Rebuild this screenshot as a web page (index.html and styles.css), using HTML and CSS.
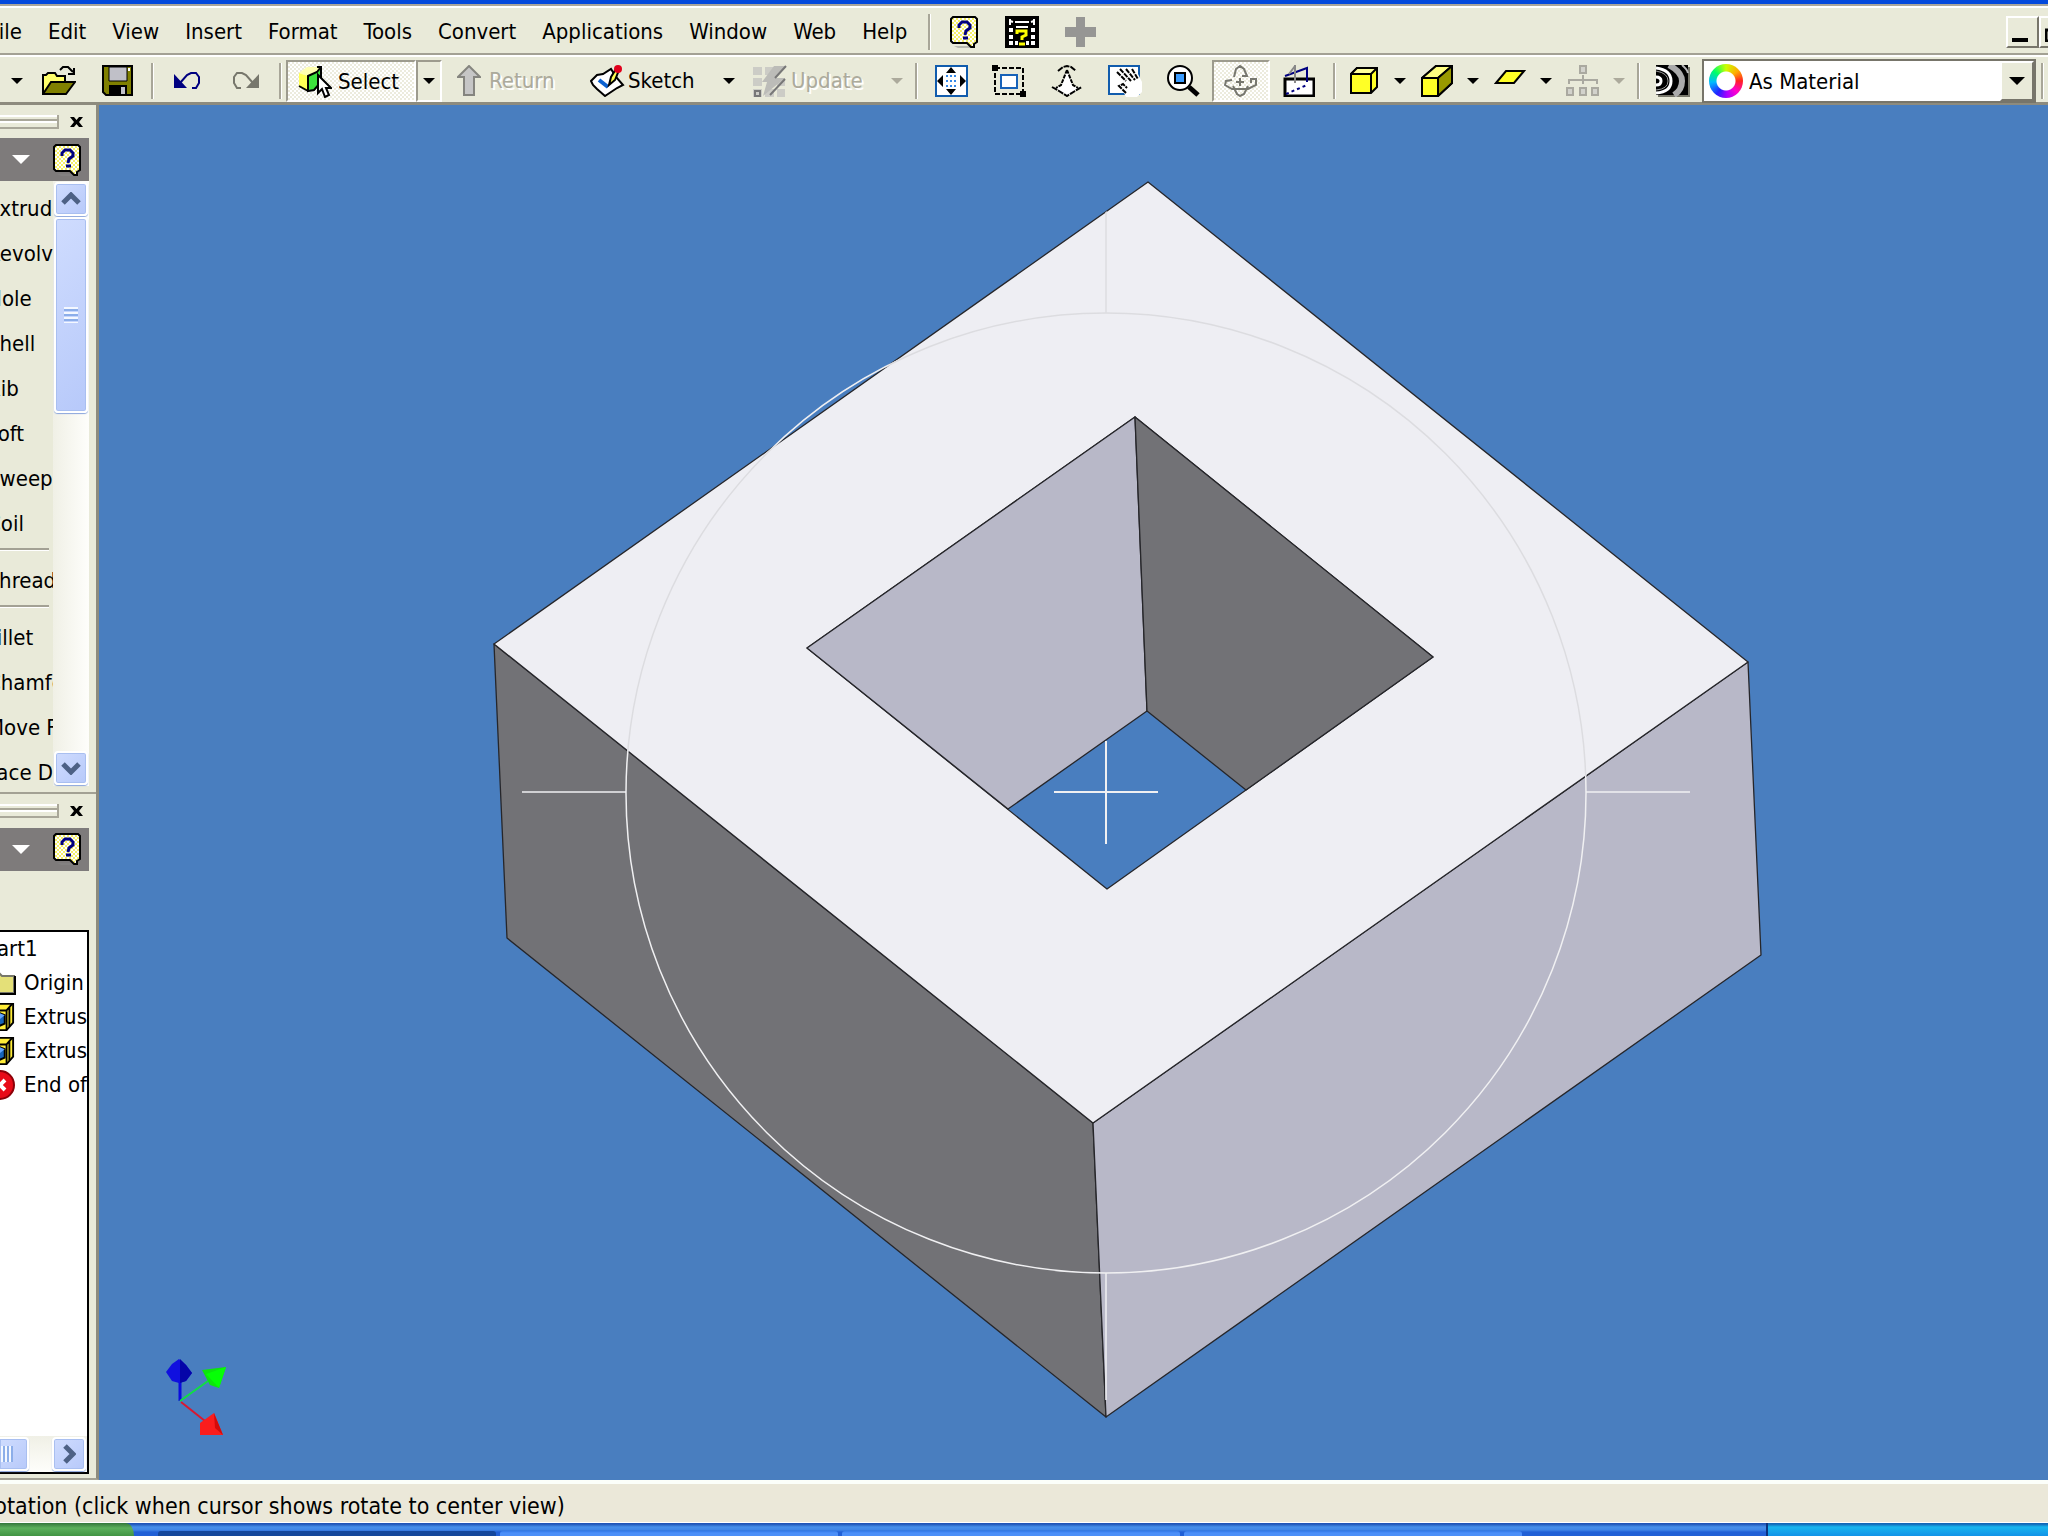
FILE: index.html
```html
<!DOCTYPE html>
<html lang="en">
<head>
<meta charset="utf-8">
<title>Part1</title>
<link rel="stylesheet" href="styles.css">
</head>
<body>
<svg class="defs" aria-hidden="true">
  <defs>
    <pattern id="dots" width="4" height="4" patternUnits="userSpaceOnUse"><rect width="4" height="4" fill="#fff"/><path d="M0 0h2v2h-2zM2 2h2v2h-2z" fill="#f5f06a"/></pattern>
    <symbol id="help" viewBox="0 0 28 32">
      <path d="M4 30h18v2h-14z" fill="#888" opacity=".5"/>
      <path d="M3 1h22l2 2v23l-3 2v3h-3l-4-4H3l-2-2V3z" fill="url(#dots)" stroke="#000" stroke-width="2"/>
      <path d="M9 12V9l3-3h5l3 3v3l-4 3-1 4M13 22h5" fill="none" stroke="#000080" stroke-width="3"/>
    </symbol>
    <symbol id="arrow" viewBox="0 0 12 6"><path d="M0 0h12L6 6z" fill="currentColor"/></symbol>
    <symbol id="close" viewBox="0 0 13 12"><path d="M0 1h4l2.500 3 2.500-3h4l-4 5 4 5H9L6.500 8 4 11H0l4-5z" fill="#000"/></symbol>
    <symbol id="feature" viewBox="0 0 32 32">
      <path d="M2 9l6-7h22v20l-7 8H2z" fill="#ffed38" stroke="#000" stroke-width="2"/>
      <path d="M23 30V9l6-7M2 9h21M26 6v20" fill="none" stroke="#000" stroke-width="2"/>
      <path d="M5 15l11-3 5 2v9l-9 4-7-3z" fill="#1764ba" stroke="#000" stroke-width="2"/><path d="M16 12l5 2-6 5-6-2z" fill="#62a5ff"/>
    </symbol>
  </defs>
</svg>

<header class="top">
  <div class="titlebar"></div>
  <div class="menubar">
    <nav class="menus" aria-label="Main menu">
      <button>File</button><button>Edit</button><button>View</button><button>Insert</button><button>Format</button><button>Tools</button><button>Convert</button><button>Applications</button><button>Window</button><button>Web</button><button>Help</button>
    </nav>
    <span class="sep"></span>
    <button class="tool" aria-label="Help topics"><svg width="28" height="32"><use href="#help"/></svg></button>
    <button class="tool" aria-label="Visual syllabus">
      <svg width="34" height="32" viewBox="0 0 34 32"><path d="M0 0h34v32H0z"/><path d="M5 3v6M29 3v6M10 6h14M5 5l3 1M29 5l-3 1" stroke="#fff" stroke-width="2"/><path d="M4 12h4v4H4zM4 19h4v4H4zM4 25h4v4H4zM26 12h4v4h-4zM26 19h4v4h-4zM26 25h4v4h-4zM11 10h12v2H11zM10 25h3v4h-3zM21 25h3v4h-3z" fill="#fff"/><path d="M12 18v-3h9v4l-4 2v3M14 28h6" fill="none" stroke="#ff0" stroke-width="3"/></svg>
    </button>
    <button class="tool" aria-label="Add"><svg width="31" height="30" viewBox="0 0 31 30"><path d="M11 0h9v10h11v10H20v10h-9V20H0V10h11z" fill="#969694"/></svg></button>
    <div class="winbuttons">
      <button aria-label="Minimize"><svg width="16" height="4" viewBox="0 0 16 4"><path d="M0 0h16v4H0z"/></svg></button>
      <button aria-label="Restore"><svg width="16" height="14" viewBox="0 0 16 14"><path d="M1 2h12v11H1z" fill="none" stroke="#000" stroke-width="3"/></svg></button>
    </div>
  </div>

  <div class="toolbar" role="toolbar" aria-label="Standard">
    <button class="drop" aria-label="New options"><svg width="12" height="6"><use href="#arrow"/></svg></button>
    <button class="tool" aria-label="Open">
      <svg width="34" height="30" viewBox="0 0 34 30"><path d="M1 28V9h3l2-2h7l2 3h8v6" fill="#ffff6b" stroke="#000" stroke-width="2"/><path d="M1 28L9 16h24l-9 12z" fill="#808000" stroke="#000" stroke-width="2"/><path d="M18 4l3-3h5l5 5M32 2v6h-6" fill="none" stroke="#000" stroke-width="2"/></svg>
    </button>
    <button class="tool" aria-label="Save">
      <svg width="31" height="31" viewBox="0 0 31 31"><path d="M1 1h29v29H4l-3-3z" fill="#808000" stroke="#000" stroke-width="2"/><path d="M7 2h18v14H7z" fill="#c0c0c8" stroke="#000" stroke-width="1"/><path d="M7 20h18v10H7z"/><path d="M19 22h4v7h-4z" fill="#c0c0c8"/><path d="M26 3h2v3h-2z" fill="#fff"/></svg>
    </button>
    <span class="sep"></span>
    <button class="tool" aria-label="Undo"><svg width="27" height="18" viewBox="0 0 27 18"><path d="M0 2v14h13z" fill="#000080"/><path d="M6 11l7-8 4-2h5l3 4v6l-3 5h-4" fill="none" stroke="#000080" stroke-width="2"/></svg></button>
    <button class="tool" aria-label="Redo"><svg width="27" height="18" viewBox="0 0 27 18"><path d="M27 2v14H14z" fill="#77776c"/><path d="M21 11l-7-8-4-2H5L2 5v6l3 5h4" fill="none" stroke="#77776c" stroke-width="2"/></svg></button>
    <span class="sep"></span>
    <button class="cmd select-cmd pressed">
      <svg width="34" height="32" viewBox="0 0 34 32"><path d="M1 7l8-6h13l-4 7-8 2z" fill="#ffffb0"/><path d="M1 7l9 3v15l-9-4z" fill="#ff5"/><path d="M10 10l9-4 4-5v15l-7 8-6 1z" fill="#3ce03c" stroke="#000" stroke-width="2"/><path d="M1 20l9 5M19 1h4" stroke="#000" stroke-width="2"/><path d="M20 9v18l4-4 3 8 4-2-3-7h5z" fill="#fff" stroke="#000" stroke-width="2"/></svg>
      Select</button>
    <button class="drop framed" aria-label="Select options"><svg width="12" height="6"><use href="#arrow"/></svg></button>
    <button class="cmd return-cmd" disabled>
      <svg width="24" height="32" viewBox="0 0 24 32"><path d="M7 30V12H1L12 1l11 11h-6v18z" fill="#c6c6c6" stroke="#85857f" stroke-width="2"/></svg>
      Return</button>
    <button class="cmd sketch-cmd">
      <svg width="36" height="32" viewBox="0 0 36 32"><path d="M1 16l6-6 6-1 8-5 5 8 7 8-6 3-12 8-8-7-4-4z" fill="#fff" stroke="#000" stroke-width="2"/><path d="M9 15l9 7" stroke="#0b61d0" stroke-width="4"/><path d="M19 20l2-8 5-8 3 1-4 10z" fill="#ff5" stroke="#000" stroke-width="2"/><circle cx="28" cy="4" r="4" fill="#e1001c"/></svg>
      Sketch</button>
    <button class="drop" aria-label="Sketch options"><svg width="12" height="6"><use href="#arrow"/></svg></button>
    <button class="cmd update-cmd" disabled>
      <svg width="34" height="32" viewBox="0 0 34 32"><path d="M0 2h9v8H0zM0 13h9v8H0zM0 24h9v8H0zM12 24h9v8h-9zM24 24h8v8h-8zM24 13h8v8h-8zM12 2h9v8h-9z" fill="#ccccc6"/><path d="M21 1h12L23 13h9L10 31l4-14h-5z" fill="#bcbcb8"/><path d="M33 1L22 13M32 14L17 30M2 26h5v5H2z" stroke="#777" fill="none" stroke-width="2"/></svg>
      Update</button>
    <button class="drop" aria-label="Update options" disabled><svg width="12" height="6"><use href="#arrow"/></svg></button>
    <span class="sep"></span>
    <button class="tool" aria-label="Zoom all">
      <svg width="33" height="32" viewBox="0 0 33 32"><path d="M1 1h31v30H1z" fill="#fff" stroke="#115cad" stroke-width="2"/><path d="M16 2l5 6H11zM16 30l5-6H11zM2 16l6-6v12zM31 16l-6-6v12z"/><path d="M11 11h11M11 21h11M11 16h11" stroke="#3488e8" stroke-width="2" stroke-dasharray="2 2"/></svg>
    </button>
    <button class="tool" aria-label="Zoom window">
      <svg width="34" height="32" viewBox="0 0 34 32"><path d="M3 3h28v26H3z" fill="none" stroke="#000" stroke-width="2" stroke-dasharray="5 2"/><path d="M0 0h6v6H0zM28 26h6v6h-6z"/><path d="M9 10h16v13H9z" fill="#fff" stroke="#1762b8" stroke-width="2"/></svg>
    </button>
    <button class="tool" aria-label="Zoom">
      <svg width="32" height="32" viewBox="0 0 32 32"><path d="M16 5l6 17h7l-13 9-13-9h7z" fill="#fff"/><path d="M7 6l5-4 4-1 4 1 5 4M1 22l7 4 8 5 8-5 7-4" fill="none" stroke="#000" stroke-width="2" stroke-dasharray="6 1"/><path d="M16 5l-6 15-5 3M16 5l6 15 5 3" fill="none" stroke="#000" stroke-width="2" stroke-dasharray="4 1"/></svg>
    </button>
    <button class="tool" aria-label="Pan">
      <svg width="34" height="32" viewBox="0 0 34 32"><path d="M1 1h30v28H1z" fill="#fff" stroke="#115cad" stroke-width="2"/><path d="M9 6l5-2 5 1 5-1 6 5 4 8v10l-5 5H18l-4-8-3-3 3-3 5 4z" fill="#fff"/><path d="M9 7l9 9M12 4l11 12M18 4l9 11M24 4l6 10M18 28l-7-7 4-2 4 4" fill="none" stroke="#000" stroke-width="2" stroke-dasharray="5 1"/></svg>
    </button>
    <button class="tool" aria-label="Zoom selected">
      <svg width="34" height="32" viewBox="0 0 34 32"><circle cx="14" cy="13" r="12" fill="#fff" stroke="#000" stroke-width="2"/><path d="M9 8h10v10H9z" fill="#3b9cff" stroke="#000" stroke-width="2"/><path d="M23 22l9 8" stroke="#000" stroke-width="5"/></svg>
    </button>
    <button class="tool pressed" aria-label="Rotate" aria-pressed="true">
      <svg width="34" height="32" viewBox="0 0 34 32"><path d="M10 12l2-8 4-3 4 3 3 7h-5M9 21l4 8 3 2 4-2 4-8M8 15l-6 1-1 4 7 4h16l8-4V14h-5v4M16 13v8M12 17h8" fill="none" stroke="#77776f" stroke-width="2"/></svg>
    </button>
    <button class="tool" aria-label="Look at">
      <svg width="32" height="32" viewBox="0 0 32 32"><path d="M2 14h29v17H2z" fill="#fff" stroke="#000" stroke-width="3"/><path d="M2 11L24 3v14" fill="none" stroke="#000080" stroke-width="2"/><path d="M12 0v18M6 9l6-8" stroke="#888" stroke-width="2"/><path d="M3 29l21-9" stroke="#000080" stroke-width="2" stroke-dasharray="3 3"/></svg>
    </button>
    <span class="sep"></span>
    <button class="split" aria-label="Display mode"><svg width="28" height="27" viewBox="0 0 28 27"><path d="M1 7l6-6h20v19l-6 6H1z" fill="#ffff26" stroke="#000" stroke-width="2"/><path d="M1 7l6-6h20l-6 6z" fill="#ffff9a" stroke="#000" stroke-width="2"/><path d="M21 7v19" stroke="#000" stroke-width="2"/></svg></button>
    <button class="drop" aria-label="Display options"><svg width="12" height="6"><use href="#arrow"/></svg></button>
    <button class="split" aria-label="Camera"><svg width="32" height="32" viewBox="0 0 32 32"><path d="M1 13L15 1h16v17L17 31H1z" fill="#ffff26" stroke="#000" stroke-width="2"/><path d="M1 13L15 1h16L17 13z" fill="#ffff80" stroke="#000" stroke-width="2"/><path d="M17 13L31 1v17L17 31z" fill="#999900" stroke="#000" stroke-width="2"/></svg></button>
    <button class="drop" aria-label="Camera options"><svg width="12" height="6"><use href="#arrow"/></svg></button>
    <button class="split plane" aria-label="Ground shadow"><svg width="32" height="16" viewBox="0 0 32 16"><path d="M2 14L12 2h18L20 14z" fill="#ffff26" stroke="#000" stroke-width="2"/></svg></button>
    <button class="drop" aria-label="Shadow options"><svg width="12" height="6"><use href="#arrow"/></svg></button>
    <button class="split" aria-label="Components" disabled><svg width="34" height="32" viewBox="0 0 34 32"><path d="M14 1h6v7h-6zM1 23h6v7H1zM14 23h6v7h-6zM26 23h6v7h-6z" fill="#d2d2cc" stroke="#aaa9a0" stroke-width="2"/><path d="M17 10v9M3 19v-4h28v4" fill="none" stroke="#aaa9a0" stroke-width="2"/></svg></button>
    <button class="drop" aria-label="Component options" disabled><svg width="12" height="6"><use href="#arrow"/></svg></button>
    <span class="sep"></span>
    <button class="tool" aria-label="Analyze faces">
      <svg width="34" height="32" viewBox="0 0 34 32"><path d="M2 2h32v30H2z" fill="#77776a"/><path d="M0 0h32v30H0z"/><path d="M0 12q5 0 5 4t-5 4M0 3q15 2 15 13T0 28" fill="none" stroke="#fff" stroke-width="3"/><path d="M0 6q12 2 12 10T0 25" fill="none" stroke="#999" stroke-width="1"/><path d="M13 0q13 7 13 16t-8 14" fill="none" stroke="#aaa" stroke-width="6"/><path d="M26 0q5 4 6 8" fill="none" stroke="#bbb" stroke-width="2"/></svg>
    </button>
    <label class="combo">
      <span class="ring"></span>
      <select aria-label="Color"><option>As Material</option></select>
      <span class="combo-button"><svg width="16" height="8" viewBox="0 0 16 8"><path d="M0 0h16L8 8z"/></svg></span>
    </label>
    <span class="sep"></span>
  </div>
</header>

<main class="workspace">
  <aside class="sidebar">
    <section class="panel">
      <div class="grip"><span></span><button aria-label="Close features"><svg width="13" height="12"><use href="#close"/></svg></button></div>
      <div class="panel-head"><button aria-label="Choose panel"><svg width="18" height="9"><use href="#arrow"/></svg></button><button aria-label="Panel help"><svg width="28" height="32"><use href="#help"/></svg></button></div>
      <div class="feature-body">
        <ul class="features">
          <li>Extrude</li><li>Revolve</li><li>Hole</li><li>Shell</li><li>Rib</li><li>Loft</li><li>Sweep</li><li>Coil</li>
          <li class="rule"></li>
          <li>Thread</li>
          <li class="rule"></li>
          <li>Fillet</li><li>Chamfer</li><li>Move Face</li><li>Face Draft</li>
        </ul>
        <div class="vscroll">
          <button class="sbtn" aria-label="Scroll up"><svg width="20" height="14" viewBox="0 0 20 14"><path d="M2 11l8-8 8 8" fill="none" stroke="#4d6185" stroke-width="5"/></svg></button>
          <div class="thumb"></div>
          <button class="sbtn end" aria-label="Scroll down"><svg width="20" height="14" viewBox="0 0 20 14"><path d="M2 3l8 8 8-8" fill="none" stroke="#4d6185" stroke-width="5"/></svg></button>
        </div>
      </div>
    </section>
    <section class="panel">
      <div class="grip"><span></span><button aria-label="Close browser"><svg width="13" height="12"><use href="#close"/></svg></button></div>
      <div class="panel-head"><button aria-label="Choose browser"><svg width="18" height="9"><use href="#arrow"/></svg></button><button aria-label="Browser help"><svg width="28" height="32"><use href="#help"/></svg></button></div>
      <div class="browser">
        <ul class="tree">
          <li class="root">Part1</li>
          <li><svg width="32" height="24" viewBox="0 0 32 24"><path d="M1 22V4l4-3h9l4 4h12v17z" fill="#e4e078" stroke="#77776a" stroke-width="2"/><path d="M31 5v18H2" fill="none" stroke="#000" stroke-width="2"/></svg>Origin</li>
          <li><svg width="32" height="30"><use href="#feature"/></svg>Extrusion1</li>
          <li><svg width="32" height="30"><use href="#feature"/></svg>Extrusion2</li>
          <li><svg width="32" height="30" viewBox="0 0 32 30"><circle cx="16" cy="15" r="14" fill="#e80b18" stroke="#8c0008" stroke-width="2"/><path d="M11 10l10 10M21 10L11 20" stroke="#fff" stroke-width="4"/></svg>End of Part</li>
        </ul>
        <div class="hscroll"><div class="thumb"></div><button class="sbtn" aria-label="Scroll right"><svg width="14" height="20" viewBox="0 0 14 20"><path d="M3 2l8 8-8 8" fill="none" stroke="#4d6185" stroke-width="5"/></svg></button></div>
      </div>
    </section>
  </aside>

  <svg class="viewport" viewBox="99 105 1949 1375" preserveAspectRatio="xMidYMid meet" role="img" aria-label="Block with a square through hole">
    <clipPath id="topface"><path d="M1148 182L1748 662L1093 1123L494 644z"/></clipPath>
    <g stroke="#26262a" stroke-width="1.300" stroke-linejoin="round">
      <path d="M494 644L1093 1123L1106 1417L507 938z" fill="#727276"/>
      <path d="M1093 1123L1748 662L1761 955L1106 1417z" fill="#b8b8c8"/>
      <path d="M1148 182L1748 662L1093 1123L494 644zM1135 417L807 648L1107 889L1433 657z" fill="#eeeef3" fill-rule="evenodd"/>
      <path d="M1135 417L807 648L1008 809L1147 711z" fill="#b8b8c8"/>
      <path d="M1135 417L1433 657L1246 790L1147 711z" fill="#727276"/>
    </g>
    <g fill="none" stroke="#f0f0f2" stroke-width="1.500">
      <circle cx="1106" cy="793" r="480"/>
      <path d="M522 792H626M1586 792H1690M1106 1273V1400"/>
      <path d="M1054 792H1158M1106 741V844" stroke-width="2"/>
    </g>
    <g fill="none" stroke="#dcdce0" stroke-width="1.500" clip-path="url(#topface)">
      <circle cx="1106" cy="793" r="480"/>
      <path d="M1106 209V313"/>
    </g>
    <path d="M180 1401v-24" stroke="#0b0be0" stroke-width="3"/>
    <path d="M166 1372l6-8 7-5 7 6 6 8-6 8-7 2-7-2z" fill="#1010df"/><path d="M180 1359l6 6 6 8-6 8-6 2z" fill="#0505a8"/>
    <path d="M180 1401l28-20" stroke="#10df42" stroke-width="2"/>
    <path d="M202 1370l24-3-7 21-9-3z" fill="#0de50d"/><path d="M206 1374l20-7-7 21z" fill="#06ff06"/>
    <path d="M181 1402l24 19" stroke="#d91830" stroke-width="2"/>
    <path d="M214 1413l9 22h-23v-12z" fill="#fa1d1d"/><path d="M214 1413l9 22-8-7z" fill="#d40a0a"/>
  </svg>
</main>

<footer>
  <div class="status">Rotation (click when cursor shows rotate to center view)</div>
  <div class="taskbar">
    <div class="start"></div>
    <div class="tasks"><span class="active"></span><span></span><span></span><span></span></div>
    <div class="tray"></div>
  </div>
</footer>
</body>
</html>
```
FILE: styles.css
```css
* { box-sizing: border-box; }
body {
  margin: 0;
  height: 100vh;
  display: flex;
  flex-direction: column;
  overflow: hidden;
  background: #e9ead9;
  color: #000;
  font: 22px/28px "DejaVu Sans Condensed", "Noto Sans", sans-serif;
}
button, select { font: inherit; color: inherit; background: none; border: 0; padding: 0; margin: 0; }
button { display: flex; align-items: center; justify-content: center; white-space: nowrap; flex: none; }
ul { list-style: none; margin: 0; padding: 0; }
svg { flex: none; }
.defs { position: absolute; width: 0; height: 0; }

.titlebar { height: 6px; background: #0349dc; border-bottom: 2px solid #a9a69c; }
.menubar {
  display: flex;
  align-items: center;
  height: 49px;
  padding-top: 2px;
  border-top: 2px solid #fff;
  border-bottom: 2px solid #a3a194;
}
.menus { display: flex; gap: 26px; margin-left: -11px; margin-right: 16px; }
.tool { width: 58px; height: 42px; }
.sep { flex: none; width: 12px; height: 36px; background: linear-gradient(90deg, transparent 5px, #a8a698 5px, #a8a698 7px, #fff 7px, #fff 8px, transparent 8px); }
.winbuttons { display: flex; margin-left: auto; margin-right: -24px; }
.winbuttons button { width: 33px; height: 32px; align-items: flex-end; padding: 0 6px 4px 0; border: 2px solid #fff; border-right-color: #77756a; border-bottom-color: #77756a; }

.toolbar {
  display: flex;
  align-items: center;
  height: 50px;
  padding-top: 2px;
  padding-left: 4px;
  border-top: 2px solid #fff;
  border-bottom: 3px solid #8d8b7e;
}
.drop { width: 26px; height: 42px; }
.framed { border: 2px solid #fff; border-left-color: #9d9b8e; border-top-color: #9d9b8e; }
.pressed {
  border: 2px solid #fff;
  border-left-color: #9d9b8e;
  border-top-color: #9d9b8e;
  background: repeating-conic-gradient(#fff 0 25%, #ecebdd 0 50%) 0 0 / 4px 4px;
}
.cmd { height: 42px; gap: 6px; justify-content: flex-start; }
.cmd:disabled, .drop:disabled { color: #acaa9c; text-shadow: 2px 2px #fff; }
.select-cmd { width: 130px; padding-left: 10px; padding-top: 2px; }
.return-cmd { width: 134px; padding-left: 15px; gap: 8px; }
.sketch-cmd { width: 140px; padding-left: 14px; gap: 2px; }
.update-cmd { width: 142px; padding-left: 11px; gap: 4px; }
.split { width: 47px; height: 42px; }
.plane svg { margin-bottom: 8px; }
.combo {
  display: flex;
  align-items: center;
  flex: 1;
  height: 44px;
  padding-left: 5px;
  background: #fff;
  border: 2px solid #77756a;
}
.ring {
  flex: none;
  width: 34px;
  height: 34px;
  border-radius: 50%;
  background: radial-gradient(circle, #fff 9px, transparent 10px), conic-gradient(#cf0, #fa0 50deg, #f22 90deg, #f0c 135deg, #a0f 175deg, #22f 215deg, #0bf 265deg, #0f6 310deg, #cf0);
}
.combo select { flex: 1; min-width: 0; height: 100%; padding-top: 3px; padding-left: 6px; appearance: none; outline: 0; }
.combo-button { display: flex; align-items: center; justify-content: center; width: 34px; height: 100%; background: #e9ead9; border: 2px solid #fff; border-right-color: #77756a; border-bottom-color: #77756a; }

.workspace { flex: 1; min-height: 0; display: grid; grid-template-columns: 99px minmax(0, 1fr); background: #497ebf; }
.sidebar {
  display: grid;
  grid-template-rows: minmax(0, 1fr) minmax(0, 1fr);
  min-height: 0;
  overflow: hidden;
  background: #e9ead9;
  border-right: 3px solid #8d8b7e;
  border-bottom: 2px solid #a3a194;
}
.panel { display: flex; flex-direction: column; min-height: 0; min-width: 0; padding-right: 7px; }
.panel + .panel { border-top: 2px solid #a3a194; }
.grip { display: flex; align-items: center; justify-content: space-between; height: 33px; flex: none; padding: 0 6px 0 0; }
.panel + .panel .grip { height: 34px; }
.grip span { width: 59px; height: 14px; border: 2px solid #a9a799; border-width: 0 2px 2px 0; background: linear-gradient(#fff 2px, transparent 2px, transparent 4px, #a9a799 4px, #a9a799 6px, #fff 6px, #fff 8px, transparent 8px); }
.panel-head { display: flex; align-items: center; justify-content: space-between; flex: none; height: 43px; padding: 0 8px 0 12px; background: #7e7b7b; color: #fff; }
.feature-body { display: flex; flex: 1; min-height: 0; margin-bottom: 6px; }
.features { flex: 1; min-width: 0; overflow: hidden; padding-top: 5px; }
.features li { height: 45px; line-height: 45px; margin-left: -13px; white-space: nowrap; }
.features .rule { height: 3px; margin: 2px 4px 7px 0; background: #a3a194; border-bottom: 1px solid #fff; }
.vscroll { flex: none; width: 36px; padding: 1px; display: flex; flex-direction: column; background: linear-gradient(90deg, #f0f0e6, #fefefb); }
.sbtn, .thumb { border: 2px solid #fff; border-radius: 4px; background: linear-gradient(135deg, #cfdcfe, #b7c9fa); box-shadow: inset 0 0 0 1px #a9bff0, 0 1px 1px #8aa5dc; }
.sbtn { height: 34px; }
.end { margin-top: auto; }
.thumb { display: flex; align-items: center; justify-content: center; }
.vscroll .thumb { height: 196px; margin-top: 1px; }
.vscroll .thumb::before { content: ""; width: 14px; height: 16px; background: repeating-linear-gradient(#f4f8ff 0 2px, #8caee9 2px 4px, #c6d5fd 4px 5px); }
.browser { flex: 1; min-height: 0; min-width: 0; display: flex; flex-direction: column; margin: 59px 0 4px; border: 2px solid #000; border-left: 0; background: #fff; }
.tree { flex: 1; min-height: 0; overflow: hidden; }
.tree li { display: flex; align-items: center; gap: 8px; height: 34px; margin-left: -16px; white-space: nowrap; }
.tree .root { margin-left: -14px; }
.hscroll { display: flex; justify-content: space-between; height: 36px; padding: 1px; flex: none; background: linear-gradient(#f0f0e6, #fefefb); }
.hscroll .thumb { width: 29px; margin-left: -1px; border-left: 0; border-radius: 0 4px 4px 0; }
.hscroll .thumb::before { content: ""; width: 12px; height: 16px; margin-right: 14px; background: repeating-linear-gradient(90deg, #f4f8ff 0 2px, #8caee9 2px 4px); }
.hscroll .sbtn { width: 34px; }
.viewport { width: 100%; height: 100%; min-height: 0; display: block; }

.status { height: 43px; padding-top: 8px; border-top: 4px solid #fcfffa; border-bottom: 1px solid #fff; background: #ebe8d9; font-size: 23px; white-space: nowrap; text-indent: -19px; }
.taskbar { display: flex; height: 13px; background: linear-gradient(#1f55b8 1px, #468fea 4px, #3f84e6 7px, #2160d6 9px); }
.start { flex: none; width: 134px; background: linear-gradient(#33763b, #5cb05c 5px, #419443); border-top-right-radius: 8px 13px; }
.tasks { display: flex; flex: 1; gap: 4px; padding: 8px 0 0 24px; }
.tasks span { width: 338px; background: linear-gradient(#347ae8, #4c8ff8 2px); border-radius: 3px 3px 0 0; }
.tasks .active { background: #14479c; }
.tray { flex: none; width: 282px; border-left: 2px solid #0a3280; background: linear-gradient(#1267b8 1px, #18b5ee 4px, #1293e8); }
```
